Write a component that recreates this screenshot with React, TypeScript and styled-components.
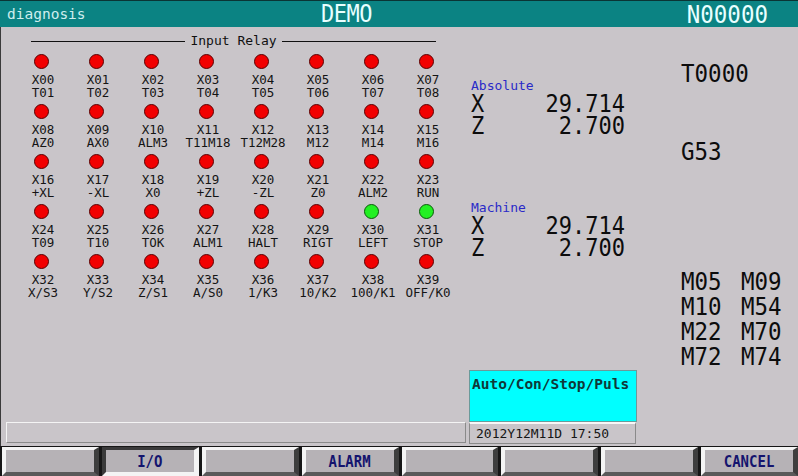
import React from "react";
import styled, { createGlobalStyle } from "styled-components";

const Global = createGlobalStyle`
  html, body { margin: 0; padding: 0; background: #c9c5c9; }
  body { width: 798px; height: 476px; overflow: hidden; font-family: "DejaVu Sans Mono", monospace; }
`;

const Screen = styled.div`
  width: 798px;
  height: 476px;
  display: flex;
  flex-direction: column;
  background: #c9c5c9;
`;

const TitleBar = styled.div`
  height: 26px;
  background: #0b8383;
  border-top: 1px solid #0a3434;
  display: grid;
  grid-template-columns: 314px auto 1fr;
  align-items: center;
  padding: 0 30px 0 7px;
  color: #e8ffff;
`;

const PageName = styled.span`
  font-size: 14.5px;
  color: #cfeeee;
  line-height: 1;
`;

const Demo = styled.span`
  font-size: 22px;
  line-height: 1;
  letter-spacing: -0.5px;
  transform: scaleY(1.1);
`;

const Block = styled.span`
  justify-self: end;
  font-size: 22.5px;
  line-height: 1;
  transform: scaleY(1.1);
`;

const Body = styled.div`
  flex: 1;
  display: flex;
  border-left: 1px solid #3a3a3a;
  min-height: 0;
`;

const LeftCol = styled.div`
  flex: 0 0 auto;
  width: 460px;
  padding-left: 5px;
  display: flex;
  flex-direction: column;
`;

const RelayPanel = styled.div`
  flex: 1;
  padding: 6px 0 0 8px;
`;

const Heading = styled.div`
  display: flex;
  align-items: center;
  gap: 5px;
  margin: 0 17px 0 17px;
  width: 405px;
  font-size: 13px;
  color: #101010;
  line-height: 16px;
  &::before, &::after {
    content: "";
    flex: 1;
    height: 1px;
    background: #101010;
  }
`;

const RelayGrid = styled.div`
  display: grid;
  grid-template-columns: repeat(8, 55px);
  grid-auto-rows: 50px;
  margin-top: 5px;
`;

const Cell = styled.div`
  display: flex;
  flex-direction: column;
  align-items: center;
  color: #141414;
`;

const Led = styled.div<{ $on?: boolean }>`
  width: 15px;
  height: 15px;
  border-radius: 50%;
  box-sizing: border-box;
  background: ${(p) => (p.$on ? "#22f022" : "#f20000")};
  border: 1px solid ${(p) => (p.$on ? "#0a5a0a" : "#5a0000")};
  margin-bottom: 5px;
`;

const Label = styled.span`
  display: block;
  padding-left: 3px;
  white-space: nowrap;
  font-size: 12.5px;
  line-height: 12.5px;
`;

const MessageBox = styled.div`
  height: 19px;
  margin: 0 0 3px 0;
  border-top: 1px solid #f4f4f4;
  border-left: 1px solid #f4f4f4;
  border-bottom: 1px solid #8a8a8a;
  border-right: 1px solid #8a8a8a;
`;

const MidCol = styled.div`
  flex: 0 0 auto;
  width: 167px;
  margin-left: 3px;
  display: flex;
  flex-direction: column;
`;

const PosGroup = styled.div<{ $top: number }>`
  margin-top: ${(p) => p.$top}px;
  margin-left: 2px;
`;

const PosTitle = styled.div`
  font-size: 13px;
  line-height: 14px;
  color: #2a2ac8;
`;

const AxisRow = styled.div`
  display: flex;
  justify-content: space-between;
  width: 154px;
  font-size: 22px;
  line-height: 22px;
  height: 22px;
  color: #0c0c0c;
  & > span { display: inline-block; transform: scaleY(1.12); }
`;

const Spacer = styled.div`
  flex: 1;
`;

const ModeBox = styled.div`
  background: #00ffff;
  border: 1px solid #6a9a9a;
  font-size: 14.5px;
  font-weight: bold;
  color: #103838;
  padding: 4px 0 0 2px;
  line-height: 18px;
  box-sizing: content-box;
  height: 46px;
  width: 164px;
`;

const DateBox = styled.div`
  height: 19px;
  margin-bottom: 2px;
  border: 1px solid #8a8a8a;
  border-top: 2px solid #f8f8f8;
  font-size: 13px;
  line-height: 19px;
  padding-left: 6px;
  color: #161616;
`;

const RightCol = styled.div`
  flex: 1 1 auto;
  min-width: 0;
  padding: 35px 0 0 45px;
  display: flex;
  flex-direction: column;
  font-size: 22.5px;
  color: #0c0c0c;
`;

const BigCode = styled.div<{ $gap: number }>`
  line-height: 23px;
  margin-bottom: ${(p) => p.$gap}px;
  & > span { display: inline-block; transform: scaleY(1.1); }
`;

const MGrid = styled.div`
  display: grid;
  grid-template-columns: 60px 60px;
  grid-auto-rows: 25px;
  line-height: 25px;
  & > span { display: inline-block; transform: scaleY(1.1); }
`;

const SoftKeys = styled.div`
  height: 30px;
  background: #161616;
  display: grid;
  grid-template-columns: repeat(8, 1fr);
  column-gap: 3px;
  padding: 1px 0 0 2px;
  box-sizing: border-box;
`;

const SoftKey = styled.div<{ $pressed?: boolean }>`
  box-sizing: border-box;
  height: 29px;
  background: #b6b2b6;
  border-style: solid;
  border-width: 3px 5px 4px 4px;
  border-color: ${(p) =>
    p.$pressed
      ? "#3a3a3a #f4f4f4 #f4f4f4 #3a3a3a"
      : "#f4f4f4 #3e3e3e #5a5a5a #f4f4f4"};
  display: flex;
  align-items: center;
  justify-content: center;
  font-size: 14px;
  font-weight: bold;
  color: #14146e;
  & > span { display: inline-block; transform: scaleY(1.1); }
`;

const relays: { x: string; n: string; on?: boolean }[] = [
  { x: "X00", n: "T01" }, { x: "X01", n: "T02" }, { x: "X02", n: "T03" }, { x: "X03", n: "T04" },
  { x: "X04", n: "T05" }, { x: "X05", n: "T06" }, { x: "X06", n: "T07" }, { x: "X07", n: "T08" },
  { x: "X08", n: "AZ0" }, { x: "X09", n: "AX0" }, { x: "X10", n: "ALM3" }, { x: "X11", n: "T11M18" },
  { x: "X12", n: "T12M28" }, { x: "X13", n: "M12" }, { x: "X14", n: "M14" }, { x: "X15", n: "M16" },
  { x: "X16", n: "+XL" }, { x: "X17", n: "-XL" }, { x: "X18", n: "X0" }, { x: "X19", n: "+ZL" },
  { x: "X20", n: "-ZL" }, { x: "X21", n: "Z0" }, { x: "X22", n: "ALM2" }, { x: "X23", n: "RUN" },
  { x: "X24", n: "T09" }, { x: "X25", n: "T10" }, { x: "X26", n: "TOK" }, { x: "X27", n: "ALM1" },
  { x: "X28", n: "HALT" }, { x: "X29", n: "RIGT" }, { x: "X30", n: "LEFT", on: true }, { x: "X31", n: "STOP", on: true },
  { x: "X32", n: "X/S3" }, { x: "X33", n: "Y/S2" }, { x: "X34", n: "Z/S1" }, { x: "X35", n: "A/S0" },
  { x: "X36", n: "1/K3" }, { x: "X37", n: "10/K2" }, { x: "X38", n: "100/K1" }, { x: "X39", n: "OFF/K0" },
];

const keys = ["", "I/O", "", "ALARM", "", "", "", "CANCEL"];

const Position = ({ title, top }: { title: string; top: number }) => (
  <PosGroup $top={top}>
    <PosTitle>{title}</PosTitle>
    <AxisRow><span>X</span><span>29.714</span></AxisRow>
    <AxisRow><span>Z</span><span>2.700</span></AxisRow>
  </PosGroup>
);

export default function App() {
  return (
    <Screen>
      <Global />
      <TitleBar>
        <PageName>diagnosis</PageName>
        <Demo>DEMO</Demo>
        <Block>N00000</Block>
      </TitleBar>
      <Body>
        <LeftCol>
          <RelayPanel>
            <Heading>Input Relay</Heading>
            <RelayGrid>
              {relays.map((r) => (
                <Cell key={r.x}>
                  <Led $on={r.on} />
                  <Label>{r.x}</Label>
                  <Label>{r.n}</Label>
                </Cell>
              ))}
            </RelayGrid>
          </RelayPanel>
          <MessageBox />
        </LeftCol>
        <MidCol>
          <Position title="Absolute" top={52} />
          <Position title="Machine" top={64} />
          <Spacer />
          <ModeBox>Auto/Con/Stop/Puls</ModeBox>
          <DateBox>2012Y12M11D 17:50</DateBox>
        </MidCol>
        <RightCol>
          <BigCode $gap={55}><span>T0000</span></BigCode>
          <BigCode $gap={106}><span>G53</span></BigCode>
          <MGrid>
            <span>M05</span><span>M09</span>
            <span>M10</span><span>M54</span>
            <span>M22</span><span>M70</span>
            <span>M72</span><span>M74</span>
          </MGrid>
        </RightCol>
      </Body>
      <SoftKeys>
        {keys.map((k, i) => (
          <SoftKey key={i} $pressed={k === "I/O"}>
            <span>{k}</span>
          </SoftKey>
        ))}
      </SoftKeys>
    </Screen>
  );
}
